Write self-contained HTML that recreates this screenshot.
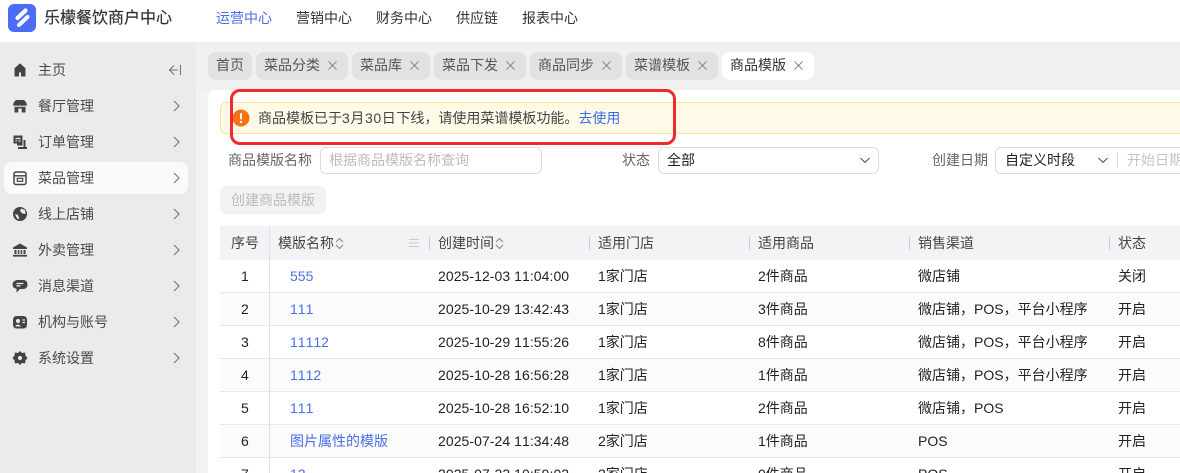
<!DOCTYPE html>
<html lang="zh">
<head>
<meta charset="utf-8">
<style>
html,body{margin:0;padding:0;width:1180px;height:473px;overflow:hidden}
#root{position:relative;width:1180px;height:473px;overflow:hidden;background:#fff;font-family:"Liberation Sans","Noto Sans CJK SC",sans-serif;font-size:14px;color:#333;font-kerning:none}
.a{position:absolute;white-space:nowrap}
.t{line-height:20px}
.tab{position:absolute;top:52px;height:28px;line-height:27px;background:#e2e2e2;border-radius:8px;color:#555;font-size:14px;padding-left:8px;box-sizing:border-box}
.tab svg{position:absolute;top:9px}
.side{left:38px;color:#4a4a4a}
.ico{position:absolute;left:12px;width:16px;height:16px}
.chev{position:absolute;left:173px;width:7px;height:12px}
.row{position:absolute;left:220px;width:960px;height:33px;border-bottom:1px solid #e6e8eb;box-sizing:border-box}
.even{background:#fafbfb}
.c{position:absolute;color:#222;line-height:20px;white-space:nowrap}
.d{letter-spacing:.06px}
.link{color:#4a6ee8}
.dv{position:absolute;top:237px;width:1px;height:13px;background:#c9cbd0}
.th{position:absolute;top:233px;line-height:20px;color:#444;white-space:nowrap}
</style>
</head>
<body>
<div id="root">
<!-- header -->
<svg class="a" style="left:8px;top:4px" width="28" height="28" viewBox="0 0 28 28"><rect width="28" height="28" rx="6" fill="#4a6cf7"/><path d="M9.500 14 17.500 6.500" stroke="#fff" stroke-width="4.200" stroke-linecap="round"/><path d="M11 21 19.500 13" stroke="#eef1ff" stroke-width="4.200" stroke-linecap="round"/></svg>
<div class="a t" style="left:44px;top:9px;font-size:16px;color:#333;-webkit-text-stroke:.2px #333">乐檬餐饮商户中心</div>
<div class="a t" style="left:216px;top:8px;color:#4a6ee8">运营中心</div>
<div class="a t" style="left:296px;top:8px">营销中心</div>
<div class="a t" style="left:376px;top:8px">财务中心</div>
<div class="a t" style="left:456px;top:8px">供应链</div>
<div class="a t" style="left:522px;top:8px">报表中心</div>

<!-- backgrounds -->
<div class="a" style="left:0;top:42px;width:196px;height:431px;background:#ebebeb"></div>
<div class="a" style="left:196px;top:42px;width:984px;height:48px;background:#f0f0f0"></div>
<div class="a" style="left:196px;top:90px;width:984px;height:383px;background:#f2f3f5"></div>
<div class="a" style="left:208px;top:90px;width:972px;height:383px;background:#fff;border-radius:8px 0 0 0"></div>

<!-- sidebar -->
<div class="a" style="left:4px;top:162px;width:184px;height:32px;background:#fafafa;border-radius:8px"></div>

<svg class="ico" style="top:62px" viewBox="0 0 16 16"><path d="M8 2 3 6.500V14H6.500V10.500Q8 9 9.500 10.500V14H13V6.500Z" fill="#444" stroke="#444" stroke-linejoin="round"/></svg>
<svg class="ico" style="top:98px" viewBox="0 0 16 16"><path d="M4 2H12Q14.500 4 15 7Q13.500 8.500 12 7.200Q10 8.500 8 7.200Q6 8.500 4 7.200Q2.500 8.500 1 7Q1.500 4 4 2Z" fill="#444"/><path d="M2.500 8.800V14.500H13.500V8.800Z" fill="#444"/><rect x="6.300" y="10.500" width="3.400" height="4" fill="#ebebeb"/></svg>
<svg class="ico" style="top:134px" viewBox="0 0 16 16"><path d="M1.500 1.500H10.500V11.500H5V9.500H1.500Z" fill="#444"/><path d="M3.500 4.500H8.500M3.500 7H4.800M6.500 7H8.500" stroke="#ebebeb" stroke-width="1.300"/><path d="M6 14H15" stroke="#444" stroke-width="2"/><path d="M12.500 6V13" stroke="#444" stroke-width="2"/></svg>
<svg class="ico" style="top:170px" viewBox="0 0 16 16"><rect x="2" y="2" width="12" height="12.500" rx="2" fill="none" stroke="#444" stroke-width="1.500"/><path d="M2 5.800H14" stroke="#444" stroke-width="1.400"/><rect x="5.300" y="8.300" width="5.400" height="3" fill="none" stroke="#444" stroke-width="1.200"/></svg>
<svg class="ico" style="top:206px" viewBox="0 0 16 16"><circle cx="8" cy="8" r="7" fill="#444"/><path d="M9 2.500 13 4 13.500 8 10.500 7.500 8 5Z" fill="#ebebeb"/><path d="M3 8 6 9 7.500 13 5 12.500Z" fill="#ebebeb"/></svg>
<svg class="ico" style="top:242px" viewBox="0 0 16 16"><path d="M8 1.500 15 5.500V7H1V5.500Z" fill="#444"/><path d="M2.500 8H4.500V12H2.500ZM5.800 8H7.300V12H5.800ZM8.700 8H10.200V12H8.700ZM11.500 8H13.500V12H11.500Z" fill="#444"/><rect x="1" y="12.800" width="14" height="1.800" fill="#444"/></svg>
<svg class="ico" style="top:278px" viewBox="0 0 16 16"><path d="M5 2H11Q15.500 2 15.500 6.500T11 11H8L4.500 14.500V10.800Q.5 10 .5 6.500T5 2Z" fill="#444"/><path d="M4.500 5.500H11.500M4.500 7.800H8.500" stroke="#ebebeb" stroke-width="1.300"/></svg>
<svg class="ico" style="top:314px" viewBox="0 0 16 16"><rect x="1" y="2" width="14" height="12.500" rx="3.500" fill="#444"/><circle cx="6" cy="7" r="2" fill="#ebebeb"/><path d="M3 12.500Q6 8.500 9 12.500Z" fill="#ebebeb"/><path d="M10.500 6H13M10.500 8.500H13" stroke="#ebebeb" stroke-width="1.200"/></svg>
<svg class="ico" style="top:350px" viewBox="0 0 16 16"><path d="M8 1 10 3 13 2.500 13.500 5.500 15.500 8 13.500 10.500 13 13.500 10 13 8 15 6 13 3 13.500 2.500 10.500 .5 8 2.500 5.500 3 2.500 6 3Z" fill="#444"/><circle cx="8" cy="8" r="2" fill="#ebebeb"/></svg>

<div class="a t side" style="top:60px">主页</div>
<div class="a t side" style="top:96px">餐厅管理</div>
<div class="a t side" style="top:132px">订单管理</div>
<div class="a t side" style="top:168px">菜品管理</div>
<div class="a t side" style="top:204px">线上店铺</div>
<div class="a t side" style="top:240px">外卖管理</div>
<div class="a t side" style="top:276px">消息渠道</div>
<div class="a t side" style="top:312px">机构与账号</div>
<div class="a t side" style="top:348px">系统设置</div>

<svg class="a" style="left:168px;top:63px" width="14" height="14" viewBox="0 0 14 14"><path d="M6 2.500 1.500 7 6 11.500M1.500 7H10M12.500 2V12" fill="none" stroke="#777" stroke-width="1.100"/></svg>
<svg class="chev" style="top:100px" viewBox="0 0 7 12"><path d="M1 1 6 6 1 11" fill="none" stroke="#777" stroke-width="1.100"/></svg>
<svg class="chev" style="top:136px" viewBox="0 0 7 12"><path d="M1 1 6 6 1 11" fill="none" stroke="#777" stroke-width="1.100"/></svg>
<svg class="chev" style="top:172px" viewBox="0 0 7 12"><path d="M1 1 6 6 1 11" fill="none" stroke="#777" stroke-width="1.100"/></svg>
<svg class="chev" style="top:208px" viewBox="0 0 7 12"><path d="M1 1 6 6 1 11" fill="none" stroke="#777" stroke-width="1.100"/></svg>
<svg class="chev" style="top:244px" viewBox="0 0 7 12"><path d="M1 1 6 6 1 11" fill="none" stroke="#777" stroke-width="1.100"/></svg>
<svg class="chev" style="top:280px" viewBox="0 0 7 12"><path d="M1 1 6 6 1 11" fill="none" stroke="#777" stroke-width="1.100"/></svg>
<svg class="chev" style="top:316px" viewBox="0 0 7 12"><path d="M1 1 6 6 1 11" fill="none" stroke="#777" stroke-width="1.100"/></svg>
<svg class="chev" style="top:352px" viewBox="0 0 7 12"><path d="M1 1 6 6 1 11" fill="none" stroke="#777" stroke-width="1.100"/></svg>

<!-- tabs -->
<div class="tab" style="left:208px;width:44px">首页</div>
<div class="tab" style="left:256px;width:92px">菜品分类<svg style="left:72px" width="9" height="9" viewBox="0 0 9 9"><path d="M.5 .5 8.500 8.500M8.500 .5 .5 8.500" stroke="#888" stroke-width="1"/></svg></div>
<div class="tab" style="left:352px;width:78px">菜品库<svg style="left:58px" width="9" height="9" viewBox="0 0 9 9"><path d="M.5 .5 8.500 8.500M8.500 .5 .5 8.500" stroke="#888" stroke-width="1"/></svg></div>
<div class="tab" style="left:434px;width:92px">菜品下发<svg style="left:72px" width="9" height="9" viewBox="0 0 9 9"><path d="M.5 .5 8.500 8.500M8.500 .5 .5 8.500" stroke="#888" stroke-width="1"/></svg></div>
<div class="tab" style="left:530px;width:92px">商品同步<svg style="left:72px" width="9" height="9" viewBox="0 0 9 9"><path d="M.5 .5 8.500 8.500M8.500 .5 .5 8.500" stroke="#888" stroke-width="1"/></svg></div>
<div class="tab" style="left:626px;width:92px">菜谱模板<svg style="left:72px" width="9" height="9" viewBox="0 0 9 9"><path d="M.5 .5 8.500 8.500M8.500 .5 .5 8.500" stroke="#888" stroke-width="1"/></svg></div>
<div class="tab" style="left:722px;width:92px;background:#fff;color:#333">商品模版<svg style="left:72px" width="9" height="9" viewBox="0 0 9 9"><path d="M.5 .5 8.500 8.500M8.500 .5 .5 8.500" stroke="#888" stroke-width="1"/></svg></div>

<!-- alert -->
<div class="a" style="left:220px;top:102px;width:970px;height:32px;background:#fff9e8;border:1px solid #ffe38f;border-radius:6px;box-sizing:border-box"></div>
<svg class="a" style="left:232px;top:109px" width="18" height="18" viewBox="0 0 18 18"><circle cx="9" cy="9" r="8.500" fill="#f97316"/><rect x="8" y="4" width="2" height="6.500" rx="1" fill="#fff"/><circle cx="9" cy="13" r="1.200" fill="#fff"/></svg>
<div class="a t" style="left:258px;top:108px;color:#444">商品模板已于<span style="letter-spacing:.6px">3月30日</span>下线，请使用菜谱模板功能。<span style="color:#3f6ee8">去使用</span></div>
<div class="a" style="left:230px;top:89px;width:446px;height:56px;border:3px solid #f02a2a;border-radius:10px;box-sizing:border-box"></div>

<!-- filters -->
<div class="a t" style="left:228px;top:150px;color:#666">商品模版名称</div>
<div class="a" style="left:320px;top:147px;width:222px;height:27px;border:1px solid #dcdcdc;border-radius:6px;box-sizing:border-box"></div>
<div class="a t" style="left:329px;top:150px;color:#bbb">根据商品模版名称查询</div>
<div class="a t" style="left:622px;top:150px;color:#666">状态</div>
<div class="a" style="left:658px;top:147px;width:221px;height:27px;border:1px solid #dcdcdc;border-radius:6px;box-sizing:border-box"></div>
<div class="a t" style="left:667px;top:150px;color:#222">全部</div>
<svg class="a" style="left:860px;top:157px" width="10" height="7" viewBox="0 0 10 7"><path d="M.5 1 5 5.500 9.500 1" fill="none" stroke="#555" stroke-width="1.100"/></svg>
<div class="a t" style="left:932px;top:150px;color:#666">创建日期</div>
<div class="a" style="left:995px;top:147px;width:200px;height:27px;border:1px solid #dcdcdc;border-radius:6px;box-sizing:border-box"></div>
<div class="a t" style="left:1005px;top:150px;color:#222">自定义时段</div>
<svg class="a" style="left:1098px;top:157px" width="10" height="7" viewBox="0 0 10 7"><path d="M.5 1 5 5.500 9.500 1" fill="none" stroke="#555" stroke-width="1.100"/></svg>
<div class="a" style="left:1117px;top:152px;width:1px;height:17px;background:#ddd"></div>
<div class="a t" style="left:1127px;top:150px;color:#c4c4c4">开始日期</div>

<div class="a" style="left:220px;top:186px;width:106px;height:28px;background:#f2f2f2;border-radius:6px;text-align:center;line-height:29px;color:#bbb">创建商品模版</div>

<!-- table header -->
<div class="a" style="left:220px;top:226px;width:960px;height:34px;background:#f2f3f5"></div>
<div class="th" style="left:231px;top:233px;color:#444">序号</div>
<div class="th" style="left:278px">模版名称</div>
<svg class="a" style="left:335px;top:237px" width="9" height="13" viewBox="0 0 9 13"><path d="M1 5 4.500 1.500 8 5M1 8 4.500 11.500 8 8" fill="none" stroke="#888" stroke-width="1"/></svg>
<svg class="a" style="left:409px;top:239px" width="10" height="8" viewBox="0 0 10 8"><path d="M0 .5H10M0 4H10M0 7.500H10" stroke="#ccc" stroke-width="1"/></svg>
<div class="dv" style="left:429px"></div>
<div class="th" style="left:438px">创建时间</div>
<svg class="a" style="left:495px;top:237px" width="9" height="13" viewBox="0 0 9 13"><path d="M1 5 4.500 1.500 8 5M1 8 4.500 11.500 8 8" fill="none" stroke="#888" stroke-width="1"/></svg>
<div class="dv" style="left:589px"></div>
<div class="th" style="left:598px">适用门店</div>
<div class="dv" style="left:749px"></div>
<div class="th" style="left:758px">适用商品</div>
<div class="dv" style="left:909px"></div>
<div class="th" style="left:918px">销售渠道</div>
<div class="dv" style="left:1109px"></div>
<div class="th" style="left:1118px">状态</div>

<!-- rows -->
<div class="row" style="top:260px"></div>
<div class="row even" style="top:293px"></div>
<div class="row" style="top:326px"></div>
<div class="row even" style="top:359px"></div>
<div class="row" style="top:392px"></div>
<div class="row even" style="top:425px"></div>
<div class="row" style="top:458px;border:0"></div>
<div class="a" style="left:269px;top:226px;width:1px;height:247px;background:#dfe1e5"></div>

<div class="c" style="left:241px;top:266px">1</div><div class="c link" style="left:290px;top:266px">555</div><div class="c d" style="left:438px;top:266px">2025-12-03 11:04:00</div><div class="c" style="left:598px;top:266px">1家门店</div><div class="c" style="left:758px;top:266px">2件商品</div><div class="c" style="left:918px;top:266px">微店铺</div><div class="c" style="left:1118px;top:266px">关闭</div>

<div class="c" style="left:241px;top:299px">2</div><div class="c link" style="left:290px;top:299px">111</div><div class="c d" style="left:438px;top:299px">2025-10-29 13:42:43</div><div class="c" style="left:598px;top:299px">1家门店</div><div class="c" style="left:758px;top:299px">3件商品</div><div class="c" style="left:918px;top:299px">微店铺，POS，平台小程序</div><div class="c" style="left:1118px;top:299px">开启</div>

<div class="c" style="left:241px;top:332px">3</div><div class="c link" style="left:290px;top:332px">11112</div><div class="c d" style="left:438px;top:332px">2025-10-29 11:55:26</div><div class="c" style="left:598px;top:332px">1家门店</div><div class="c" style="left:758px;top:332px">8件商品</div><div class="c" style="left:918px;top:332px">微店铺，POS，平台小程序</div><div class="c" style="left:1118px;top:332px">开启</div>

<div class="c" style="left:241px;top:365px">4</div><div class="c link" style="left:290px;top:365px">1112</div><div class="c d" style="left:438px;top:365px">2025-10-28 16:56:28</div><div class="c" style="left:598px;top:365px">1家门店</div><div class="c" style="left:758px;top:365px">1件商品</div><div class="c" style="left:918px;top:365px">微店铺，POS，平台小程序</div><div class="c" style="left:1118px;top:365px">开启</div>

<div class="c" style="left:241px;top:398px">5</div><div class="c link" style="left:290px;top:398px">111</div><div class="c d" style="left:438px;top:398px">2025-10-28 16:52:10</div><div class="c" style="left:598px;top:398px">1家门店</div><div class="c" style="left:758px;top:398px">2件商品</div><div class="c" style="left:918px;top:398px">微店铺，POS</div><div class="c" style="left:1118px;top:398px">开启</div>

<div class="c" style="left:241px;top:431px">6</div><div class="c link" style="left:290px;top:431px">图片属性的模版</div><div class="c d" style="left:438px;top:431px">2025-07-24 11:34:48</div><div class="c" style="left:598px;top:431px">2家门店</div><div class="c" style="left:758px;top:431px">1件商品</div><div class="c" style="left:918px;top:431px">POS</div><div class="c" style="left:1118px;top:431px">开启</div>

<div class="c" style="left:241px;top:464px">7</div><div class="c link" style="left:290px;top:464px">12</div><div class="c d" style="left:438px;top:464px">2025-07-23 10:59:02</div><div class="c" style="left:598px;top:464px">2家门店</div><div class="c" style="left:758px;top:464px">0件商品</div><div class="c" style="left:918px;top:464px">POS</div><div class="c" style="left:1118px;top:464px">开启</div>
</div>
</body>
</html>
